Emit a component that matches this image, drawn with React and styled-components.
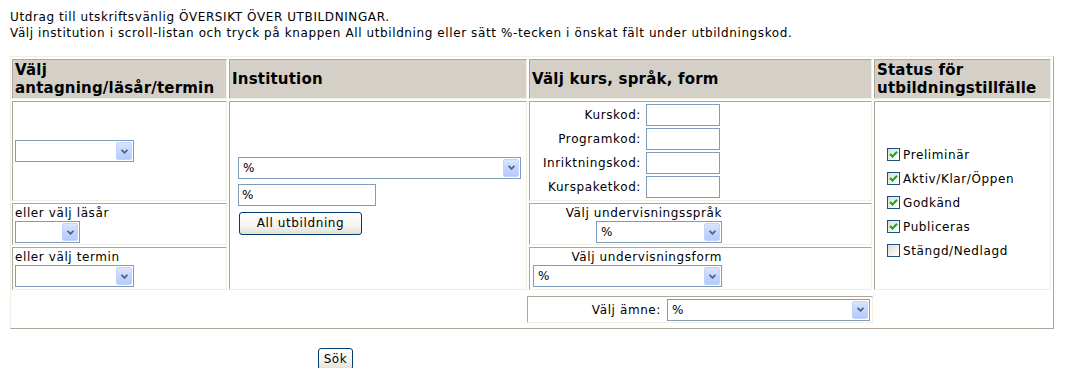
import styled, { createGlobalStyle } from 'styled-components'

const GlobalStyle = createGlobalStyle`
  body {
    margin: 0;
    background: #fff;
    color: #000;
    font-family: "DejaVu Sans", Verdana, sans-serif;
    font-size: 12px;
    letter-spacing: 0.6px;
  }
`

const Sida = styled.div`
  padding: 9px 0 0 10px;
`

const Intro = styled.p`
  margin: 0 0 15px 0;
  line-height: 16px;
`

const Ram = styled.div`
  box-sizing: border-box;
  width: 1044px;
  display: grid;
  grid-template-columns: 215px 298px 343px 177px;
  column-gap: 2px;
  row-gap: 2px;
  padding: 2px 2px 5px 1px;
  border: 1px solid;
  border-color: #f1efe2 #aca899 #aca899 #f1efe2;
`

const Rubrik = styled.div`
  box-sizing: border-box;
  height: 40px;
  display: flex;
  align-items: center;
  padding: 0 1px 0 2px;
  background: #d4d0c8;
  border: 1px solid;
  border-color: #aca899 #f1efe2 #f1efe2 #aca899;
  font-weight: bold;
  font-size: 15px;
  line-height: 18px;
  letter-spacing: 0.2px;
`

const Cell = styled.div`
  box-sizing: border-box;
  height: ${p => p.$h || 189}px;
  background: #fff;
  border: 1px solid;
  border-color: #aca899 #f1efe2 #f1efe2 #aca899;
`

const Stapel = styled.div`
  display: flex;
  flex-direction: column;
  gap: 2px;
`

const MittCell = styled(Cell)`
  display: flex;
  align-items: center;
  padding-left: 2px;
`

const EtikettCell = styled(Cell)`
  padding: 1px 2px;
  display: flex;
  flex-direction: column;
  align-items: flex-start;
`

const HogerBlock = styled.div`
  width: 190px;
  display: flex;
  flex-direction: column;
  align-items: flex-end;
`

const Etikett = styled.div`
  line-height: 16px;
  white-space: nowrap;
`

const InstCell = styled(Cell)`
  display: flex;
  flex-direction: column;
  justify-content: center;
  align-items: flex-start;
  gap: 5px;
  padding-left: 8px;
`

const KodGrid = styled.div`
  display: grid;
  grid-template-columns: 111px 74px;
  column-gap: 5px;
  row-gap: 2px;
  align-items: center;
  padding-top: 2px;
`

const KodEtikett = styled.div`
  text-align: right;
  white-space: nowrap;
`

const Falt = styled.div`
  box-sizing: border-box;
  width: ${p => p.$w}px;
  height: ${p => p.$h || 22}px;
  border: 1px solid #7f9db9;
  background: #fff;
  padding-left: 3px;
  line-height: 20px;
`

const ValjRuta = styled.div`
  box-sizing: border-box;
  width: ${p => p.$w}px;
  height: 22px;
  border: 1px solid #7f9db9;
  background: #fff;
  display: flex;
  align-items: stretch;
  padding: 1px;
`

const ValjText = styled.div`
  flex: 1;
  padding-left: 3px;
  line-height: 18px;
`

const Pil = styled.div`
  width: 16px;
  border-radius: 2px;
  background: linear-gradient(180deg, #dbe6fe 0%, #c4d5fc 50%, #b6cafa 100%);
  border: 1px solid #c3d3fd;
  box-sizing: border-box;
  display: flex;
  align-items: center;
  justify-content: center;
`

const XpKnapp = styled.button`
  box-sizing: border-box;
  width: ${p => p.$w}px;
  height: ${p => p.$h || 23}px;
  margin-top: ${p => p.$mt || 0}px;
  margin-left: ${p => p.$ml || 0}px;
  border: 1px solid #003c74;
  border-radius: 3px;
  background: linear-gradient(180deg, #ffffff 0%, #f4f3ee 60%, #e3e0d5 100%);
  font-family: "DejaVu Sans", Verdana, sans-serif;
  font-size: 12px;
  letter-spacing: 0.6px;
  color: #000;
  padding: 0;
`

const StatusCell = styled(Cell)`
  padding: 46px 0 0 12px;
  display: flex;
  flex-direction: column;
  gap: 11px;
`

const Rad = styled.label`
  display: flex;
  align-items: center;
  gap: 3px;
  height: 13px;
  white-space: nowrap;
`

const Ruta = styled.span`
  box-sizing: border-box;
  width: 13px;
  height: 13px;
  border: 1px solid #1c5180;
  background: linear-gradient(135deg, #dcdcd7 0%, #f5f5f2 70%, #fff 100%);
  display: flex;
  align-items: center;
  justify-content: center;
`

const AmneCell = styled(Cell)`
  grid-column: 3;
  margin: 4px -1px 0 -2px;
  display: flex;
  justify-content: flex-end;
  align-items: center;
  gap: 6px;
  padding-right: 2px;
`

const Valj = ({ w, value }) => (
  <ValjRuta $w={w}>
    <ValjText>{value}</ValjText>
    <Pil>
      <svg width="7" height="5" viewBox="0 0 7 5">
        <path d="M0.5 0.8 L3.5 3.8 L6.5 0.8" fill="none" stroke="#4d6185" strokeWidth="1.8" />
      </svg>
    </Pil>
  </ValjRuta>
)

const Kryss = ({ checked, text }) => (
  <Rad>
    <Ruta>
      {checked && (
        <svg width="9" height="9" viewBox="0 0 9 9">
          <path d="M1 4 L3.5 6.5 L8 1.8" fill="none" stroke="#21a121" strokeWidth="2" />
        </svg>
      )}
    </Ruta>
    {text}
  </Rad>
)

const status = [
  { text: 'Preliminär', checked: true },
  { text: 'Aktiv/Klar/Öppen', checked: true },
  { text: 'Godkänd', checked: true },
  { text: 'Publiceras', checked: true },
  { text: 'Stängd/Nedlagd', checked: false },
]

export default function App() {
  return (
    <Sida>
      <GlobalStyle />
      <Intro>
        Utdrag till utskriftsvänlig ÖVERSIKT ÖVER UTBILDNINGAR.
        <br />
        Välj institution i scroll-listan och tryck på knappen All utbildning eller sätt %-tecken i önskat fält under utbildningskod.
      </Intro>

      <Ram>
        <Rubrik>Välj antagning/läsår/termin</Rubrik>
        <Rubrik>Institution</Rubrik>
        <Rubrik>Välj kurs, språk, form</Rubrik>
        <Rubrik>Status för utbildningstillfälle</Rubrik>

        <Stapel>
          <MittCell $h={100}>
            <Valj w={119} value="" />
          </MittCell>
          <EtikettCell $h={42}>
            <Etikett>eller välj läsår</Etikett>
            <Valj w={65} value="" />
          </EtikettCell>
          <EtikettCell $h={43}>
            <Etikett>eller välj termin</Etikett>
            <Valj w={119} value="" />
          </EtikettCell>
        </Stapel>

        <InstCell>
          <Valj w={283} value="%" />
          <Falt $w={138}>%</Falt>
          <XpKnapp $w={123} $mt={1} $ml={1}>All utbildning</XpKnapp>
        </InstCell>

        <Stapel>
          <Cell $h={100}>
            <KodGrid>
              <KodEtikett>Kurskod:</KodEtikett>
              <Falt $w={74} />
              <KodEtikett>Programkod:</KodEtikett>
              <Falt $w={74} />
              <KodEtikett>Inriktningskod:</KodEtikett>
              <Falt $w={74} />
              <KodEtikett>Kurspaketkod:</KodEtikett>
              <Falt $w={74} />
            </KodGrid>
          </Cell>
          <EtikettCell $h={42}>
            <HogerBlock>
              <Etikett>Välj undervisningsspråk</Etikett>
              <Valj w={126} value="%" />
            </HogerBlock>
          </EtikettCell>
          <EtikettCell $h={43}>
            <HogerBlock>
              <Etikett>Välj undervisningsform</Etikett>
              <Valj w={189} value="%" />
            </HogerBlock>
          </EtikettCell>
        </Stapel>

        <StatusCell>
          {status.map(s => (
            <Kryss key={s.text} checked={s.checked} text={s.text} />
          ))}
        </StatusCell>

        <AmneCell $h={27}>
          <Etikett>Välj ämne:</Etikett>
          <Valj w={203} value="%" />
        </AmneCell>
      </Ram>

      <XpKnapp $w={35} $h={22} $mt={19} $ml={308}>Sök</XpKnapp>
    </Sida>
  )
}
